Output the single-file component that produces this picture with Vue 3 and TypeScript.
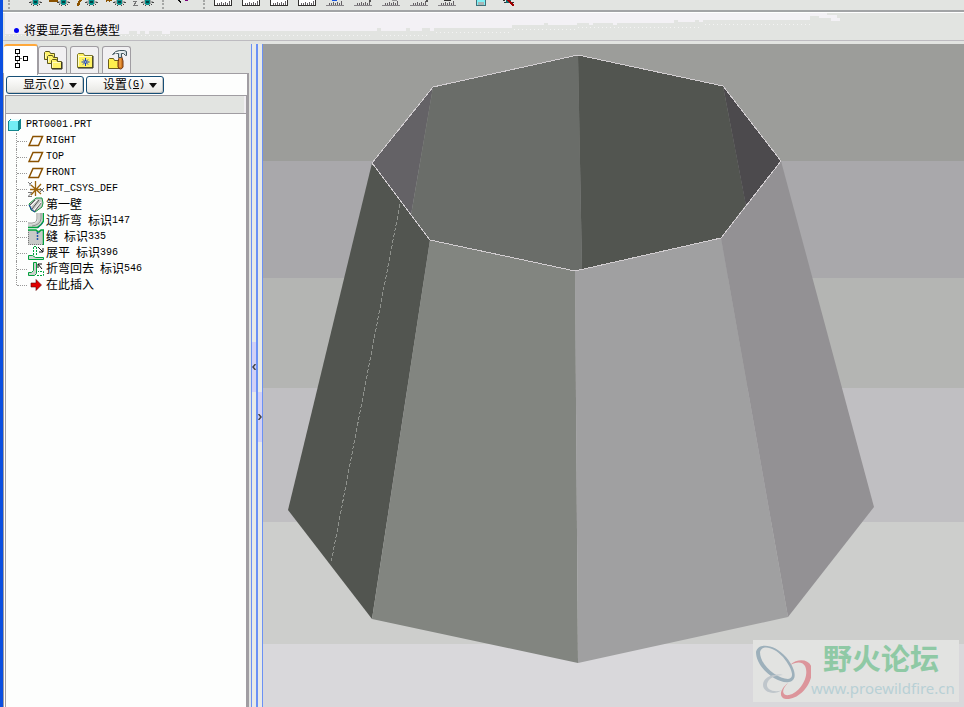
<script setup lang="ts">
import { ref } from 'vue'

interface TreeItem { icon: string; name: string }

const datumTools: string[] = ['plane', 'axis-plane', 'axis', 'point', 'csys']
const axisMarks: Record<string, string> = {
  plane: '',
  'axis-plane': 'M0 0v1h9',
  axis: 'M4 0l-2 2v2h-1v2',
  point: 'M1 1l2-1l2 1M6 0v1',
  csys: 'M0 1h4l-3 4h4',
}
const rulerTools: { label: string; tone: string; extra?: string; mark?: string }[] = [
  { label: '线框', tone: 'solid' },
  { label: '隐藏线', tone: 'solid' },
  { label: '消隐', tone: 'solid' },
  { label: '着色', tone: 'solid' },
  { label: '测量', tone: 'pale', extra: 'M6 0h5v1h-5z', mark: '#1454e0' },
  { label: '区域', tone: 'pale', extra: 'M15 0h2v2h-2z', mark: '#555555' },
  { label: '分析', tone: 'pale', extra: 'M10 0h5v1h-5z', mark: '#999999' },
  { label: '曲线', tone: 'pale', extra: 'M16 0h2v2h-2z', mark: '#555555' },
  { label: '曲面', tone: 'pale', extra: 'M6 0h7v1h-7z', mark: '#333333' },
]
const tabs = ['模型树', '文件夹浏览器', '收藏夹', '连接']
const activeTab = ref(0)
const menus = [
  { text: '显示', key: 'O' },
  { text: '设置', key: 'G' },
]
const items: TreeItem[] = [
  { icon: 'plane', name: 'RIGHT' },
  { icon: 'plane', name: 'TOP' },
  { icon: 'plane', name: 'FRONT' },
  { icon: 'csys', name: 'PRT_CSYS_DEF' },
  { icon: 'wall', name: '第一壁' },
  { icon: 'bend', name: '边折弯 标识147' },
  { icon: 'rip', name: '缝 标识335' },
  { icon: 'unbend', name: '展平 标识396' },
  { icon: 'bendback', name: '折弯回去 标识546' },
  { icon: 'insert', name: '在此插入' },
]
/* Latin and Han runs are set at different sizes so both fall on the half-width grid. */
function runs(name: string): { text: string; latin: boolean }[] {
  const parts = name.match(/[\x00-\x7f]+|[^\x00-\x7f]+/g) ?? []
  return parts.map((text) => ({ text, latin: text.charCodeAt(0) < 128 }))
}
</script>

<template>
  <div class="window">
    <header class="toolbar">
      <span class="grip"></span>
      <button v-for="tool in datumTools" :key="tool" class="tool" type="button" :aria-label="tool">
        <svg width="28" height="8" viewBox="0 0 28 8" shape-rendering="crispEdges">
          <path :d="axisMarks[tool]" fill="none" :stroke="tool === 'csys' ? '#777777' : '#8a5200'" :stroke-width="tool === 'csys' ? 1 : 2" />
          <path d="M9 1h2v-1h7v1h2v1h-1v1h-1v1h-1v1h-5v-1h-2v-1h-1v-1h-1z" fill="#a4a7a4" />
          <path d="M12 0h5v4h-1v1h-3v-1h-1z" fill="#00908c" />
          <path d="M13 1h3v2h-3z" fill="#004242" />
          <path d="M8 2h2v1h-2zM19 2h2v1h-2zM10 4h1v1h-1zM18 4h1v1h-1zM12 5h1v1h-1zM16 5h1v1h-1z" fill="#444" />
        </svg>
      </button>
      <span class="grip inner"></span>
      <button class="tool" type="button" aria-label="选取">
        <svg width="28" height="8" viewBox="0 0 28 8" shape-rendering="crispEdges">
          <path d="M11 0h2v1h1v2h-1v-1h-1v-1h-1z" fill="#111" />
          <path d="M18 0h3v1h-3z" fill="#7b007b" />
        </svg>
      </button>
      <span class="grip wide"></span>
      <button v-for="tool in rulerTools" :key="tool.label" class="tool" :class="tool.tone" type="button" :aria-label="tool.label">
        <svg width="28" height="8" viewBox="0 0 28 8" shape-rendering="crispEdges">
          <path class="face" d="M6 0h16v5h-16z" />
          <path class="line" d="M5 0h1v5h-1zM22 0h1v5h-1z" />
          <path class="line" d="M5 5h18v1h-18z" />
          <path class="tick" d="M8 3v2M10 3v2M12 2v3M14 3v2M16 2v3M18 3v2M20 1v4" transform="translate(.5)" />
          <path v-if="tool.extra" :d="tool.extra" :fill="tool.mark" transform="translate(5)" />
        </svg>
      </button>
      <span class="space"></span>
      <button class="tool" type="button" aria-label="保存">
        <svg width="28" height="8" viewBox="0 0 28 8" shape-rendering="crispEdges">
          <path d="M9 0h10v6h-10z" fill="#3f6f78" />
          <path d="M10 0h8v5h-8z" fill="#7df0f4" />
          <path d="M11 2h6v3h-6z" fill="#a9b4b4" />
        </svg>
      </button>
      <button class="tool" type="button" aria-label="关闭显示">
        <svg width="28" height="8" viewBox="0 0 28 8" shape-rendering="crispEdges">
          <path d="M8 0h2v1h-2zM9 2h3v1h-3zM15 2h4v1h-4z" fill="#333" />
          <path d="M11 0h5v3h-5z" fill="#087070" />
          <path d="M13 0l6 6" stroke="#a00000" stroke-width="2" />
        </svg>
      </button>
    </header>

    <div class="message">
      <svg class="sheen" width="964" height="28" viewBox="0 0 964 28" shape-rendering="crispEdges" aria-hidden="true">
        <path fill="#f3f1f5" d="M5 0H827V2H837V5H840V8H831V5H819V3H810V7H703V9H699V7H695V9H678V7H674V10H617V12H613V10H593V12H589V10H577V12H548V10H544V12H512V15H434V18H430V15H422V18H410V15H406V18H381V15H377V18H170V21H162V18H149V21H145V18H140V21H137V18H129V21H5z" />
        <path fill="none" stroke="#f4f4f4" stroke-dasharray="1 3" d="M5 22.500H370M382 22.500H430M436 19.500H512M514 16.500H575M578 14.500H700M705 11.500H812" />
      </svg>
      <span class="bullet"></span>
      <span class="message-text">将要显示着色模型</span>
    </div>

    <main class="work">
      <aside class="navigator">
        <nav class="tabs">
          <button v-for="(tab, i) in tabs" :key="tab" type="button" class="tab" :class="{ active: activeTab === i }" :aria-label="tab" @click="activeTab = i">
            <svg v-if="i === 0" width="20" height="20" viewBox="0 0 20 20" shape-rendering="crispEdges">
              <path d="M6 5v9M8 9h3" stroke="#777" />
              <g fill="#fff" stroke="#000">
                <path d="M4.500 .5h4v4h-4zM4.500 7.500h4v4h-4zM4.500 14.500h4v4h-4zM12.500 7.500h4v4h-4z" />
              </g>
            </svg>
            <svg v-else-if="i === 1" width="20" height="20" viewBox="0 0 20 20">
              <g fill="#fff36a" stroke="#5c5720">
                <path d="M1.500 9.500v-7l1-1h4l1 2h4v6z" />
                <path d="M4.500 13.500v-7l1-1h4l1 2h4v6z" />
                <path d="M8.500 18.500v-8l1-1h4l1 2h4v7z" />
              </g>
              <path d="M2.500 8V4M5.500 12V8M9.500 17.500v-5h8" stroke="#fffbc0" fill="none" />
              <path d="M9 19h10v-7" stroke="#27261a" fill="none" />
            </svg>
            <svg v-else-if="i === 2" width="20" height="20" viewBox="0 0 20 20">
              <path d="M2.500 17.500v-13l1-1h5l1 2h8v12z" fill="#fff263" stroke="#7b762f" />
              <path d="M3 18h15V6" stroke="#28261a" fill="none" />
              <path d="M3.500 16V5M4 6.500h13" stroke="#fffccb" fill="none" />
              <path d="M10.500 8v8M6.500 12h8M8 9.500l5 5M13 9.500l-5 5" stroke="#123bc4" />
              <path d="M10 11.500h1v1h-1z" fill="#fff" />
            </svg>
            <svg v-else width="20" height="20" viewBox="0 0 20 20">
              <path d="M1.500 18.500v-9l1-1h4l1 2h5v8z" fill="#fff04d" stroke="#6b5d20" />
              <path d="M12.500 6h2l1.500 5v6q-1 2-2.500 2t-2.500-2v-5z" fill="#d27a22" stroke="#6e3310" />
              <path d="M13 8v9" stroke="#ffb35c" />
              <path d="M5.500 4.500q3-4 7-4h5l2 1v4h-1l-2-2h-2v4h-3v-4q-3-1-6 1z" fill="#cfdadd" stroke="#40545c" />
              <path d="M8 3l5-1h4" stroke="#fff" fill="none" />
            </svg>
          </button>
        </nav>
        <section class="panel">
          <div class="menus">
            <button v-for="menu in menus" :key="menu.key" class="menu" type="button">
              <span>{{ menu.text }}</span><span class="latin">(<u>{{ menu.key }}</u>)</span>
              <svg width="8" height="5" viewBox="0 0 8 5" aria-hidden="true"><path d="M0 0h8L4 5z" fill="#101010" /></svg>
            </button>
          </div>
          <div class="column-head"></div>
          <div class="tree">
            <div class="root-row">
              <svg width="14" height="14" viewBox="0 0 14 14" shape-rendering="crispEdges">
                <path d="M0 3l3-2h10v9l-3 3H0z" fill="#12858c" />
                <path d="M1 3l3-2h8l-2 2z" fill="#e8ffff" />
                <path d="M1 3h9v9H1z" fill="#72edf4" />
              </svg>
              <span class="latin">PRT0001.PRT</span>
            </div>
            <ul class="branch">
              <li v-for="item in items" :key="item.name" class="row">
                <span class="twig"></span>
                <svg width="16" height="16" viewBox="0 0 16 16" aria-hidden="true">
                  <path v-if="item.icon === 'plane'" d="M5 3.500h9.500l-4 9h-9.500z" fill="none" stroke="#8a5200" stroke-width="1.500" />
                  <g v-else-if="item.icon === 'csys'" fill="none">
                    <path d="M7.500 0v15M2 8.500h11M3 14l10-11M3 4l10 9" stroke="#9a640c" stroke-width="1.300" />
                    <path d="M0 1l2 2l2-2M2 3v2M0 11.500h4l-4 4h4M12 7l4 4M16 7l-4 4" stroke="#777" />
                  </g>
                  <g v-else-if="item.icon === 'wall'">
                    <path d="M1 7l7-6h6l1 5l-1 4l-7 5l-4-2z" fill="#c9cbc9" stroke="#16933f" />
                    <path d="M2 8l5-5M4 12l7-9M7 14l6-8" stroke="#555" />
                    <path d="M1 8l3 5l3 2" fill="none" stroke="#1737a8" />
                    <path d="M3 9l6-6M6 13l7-8" stroke="#fff" />
                  </g>
                  <g v-else-if="item.icon === 'bend'" fill="none">
                    <path d="M0 11q9 1 10-4V0h5v8q-2 6-9 7H0z" fill="#cfd1cf" />
                    <path d="M0 10q9 1 9-4V0M4 13q8-1 9-7V0" stroke="#8c8f8c" />
                    <path d="M15.500 0v8q-2 4-6 6.500H0" stroke="#00a23c" stroke-width="1.500" />
                    <path d="M10 15l5-5" stroke="#2f55b5" stroke-dasharray="1 1" />
                  </g>
                  <g v-else-if="item.icon === 'rip'">
                    <path d="M0 1h16v15H0z" fill="#c8cac8" />
                    <path d="M.5 1v14.500H15" stroke="#777" stroke-dasharray="1 1" fill="none" />
                    <path d="M0 1h8l2 2h1l2-2h3M15.500 1v15" stroke="#00a23c" stroke-width="1.500" fill="none" />
                    <path d="M9.500 3v8" stroke="#1e55a8" stroke-width="1.500" stroke-dasharray="2 1" />
                  </g>
                  <g v-else-if="item.icon === 'unbend'" fill="none">
                    <path d="M.5 10.500h4l3 2h8v2H.5z" fill="#d3d5d3" stroke="#00a23c" />
                    <path d="M5.500 10V1.500h3V11" stroke="#00a23c" stroke-dasharray="2 1" />
                    <path d="M10 2l5 5M15 3v4h-4" stroke="#111" />
                  </g>
                  <g v-else-if="item.icon === 'bendback'" fill="none">
                    <path d="M.5 11.500h3l2-2v-8h3v11l-2 2h-6z" fill="#cdd0cd" stroke="#00a23c" />
                    <path d="M9 14.500h6.500v-4H10" stroke="#00a23c" stroke-dasharray="2 1" />
                    <path d="M14 8l-4-5M10 7V3h4" stroke="#111" />
                  </g>
                  <path v-else d="M3 6h5V2.500l5.500 5.500l-5.500 5.500V10H3z" fill="#e00000" stroke="#5d0808" stroke-width=".6" />
                </svg>
                <span class="name"><span v-for="(run, i) in runs(item.name)" :key="i" :class="{ latin: run.latin }">{{ run.text }}</span></span>
              </li>
            </ul>
          </div>
        </section>
      </aside>

      <div class="splitter">
        <div class="track"><button class="handle first" type="button" aria-label="折叠"><svg width="4" height="6" viewBox="0 0 4 6"><path d="M3.500 0L1 3l2.500 3" fill="none" stroke="#444" stroke-width="1.500" /></svg></button></div>
        <div class="track"><button class="handle second" type="button" aria-label="展开"><svg width="4" height="6" viewBox="0 0 4 6"><path d="M.5 0L3 3L.5 6" fill="none" stroke="#444" stroke-width="1.500" /></svg></button></div>
      </div>

      <section class="viewport">
        <svg class="model" viewBox="263 44 701 663" preserveAspectRatio="xMidYMin meet" role="img" aria-label="PRT0001">
          <path d="M372 163L433 87L411 215z" fill="#646266" />
          <path d="M433 87L578 55L582 270L575 271L430 240L411 215z" fill="#6a6d69" />
          <path d="M578 55L723 86L746 205L721 238L582 270z" fill="#525550" />
          <path d="M723 86L781 161L746 206z" fill="#4c4a4d" />
          <path d="M372 163L288 510L372 619L430 240z" fill="#525550" />
          <path d="M430 240L372 619L578 663L575 271z" fill="#828580" />
          <path d="M575 271L578 663L788 617L721 238z" fill="#a0a0a1" />
          <path d="M721 238L788 617L874 507L781 161z" fill="#939194" />
          <path d="M400 204L331 563" stroke="#8f928d" stroke-dasharray="4 2" shape-rendering="crispEdges" />
          <path d="M433 87L578 55L723 86L781 161L721 238L575 271L430 240L372 163z" fill="none" stroke="#d2ced1" shape-rendering="crispEdges" />
        </svg>
        <div class="watermark">
          <svg width="56" height="58" viewBox="0 0 56 58" aria-hidden="true">
            <path fill="#9db0bb" fill-rule="evenodd" d="M1 9C3-1 20 1 31 14C42 27 42 38 34 39C22 41 1 25 1 9zM5 9C5 23 23 36 33 36C41 35 36 24 28 14C19 4 7 1 5 9z" />
            <path fill="#bfc6cb" fill-rule="evenodd" d="M28 32C17 30 8 35 8 42C8 49 19 53 27 47C20 50 11 47 12 41C13 35 21 32 28 32z" />
            <path fill="#dc959b" fill-rule="evenodd" d="M35 22C44 14 56 17 57 26C58 41 44 57 31 56C23 55 25 46 33 40C25 48 28 53 34 52C45 50 55 33 50 23C47 18 41 19 35 22z" />
          </svg>
          <div class="brand">
            <strong>野火论坛</strong>
            <span>www.proewildfire.cn</span>
          </div>
        </div>
      </section>
    </main>
  </div>
</template>

<style>
body { margin: 0; background: #e2e4e1; }
</style>

<style scoped>
* { box-sizing: border-box; }
button { padding: 0; border: 0; background: none; font: inherit; color: inherit; }
svg { display: block; flex: none; }
.window {
  display: flex;
  flex-direction: column;
  min-height: 100vh;
  border-left: 3px solid #0b4fe0;
  background: #e2e4e1;
  color: #000;
  font: 12px/16px "Liberation Sans", "Noto Sans CJK SC", sans-serif;
}
.latin { font: 10px/16px "Liberation Mono", monospace; }
.toolbar {
  display: flex;
  align-items: flex-start;
  height: 12px;
  padding-left: 5px;
  border-bottom: 2px solid #a2a4a6;
  overflow: hidden;
}
.tool { flex: none; width: 28px; height: 8px; }
.grip { flex: none; width: 13px; height: 9px; border-left: 2px dotted #a5a7a5; }
.grip.inner { width: 5px; margin-left: 1px; }
.grip.wide { width: 6px; margin-left: 8px; }
.space { width: 6px; }
.solid .face { fill: #fff; }
.pale .face { fill: none; }
.solid .line { fill: #33312f; }
.pale .line { fill: #858286; }
.pale .line:nth-of-type(2) { fill: none; }
.tick { fill: none; stroke: #656065; }
.message {
  position: relative;
  display: flex;
  align-items: center;
  gap: 5px;
  height: 29px;
  padding: 8px 0 0 11px;
  border-top: 1px solid #fff;
  border-bottom: 1px solid #bdbbc0;
}
.sheen { position: absolute; top: 0; left: -3px; }
.bullet { position: relative; width: 5px; height: 5px; border-radius: 50%; background: #0000f5; }
.message-text { position: relative; }
.work { display: flex; flex: 1; padding-top: 3px; }
.navigator { display: flex; flex-direction: column; width: 246px; }
.tabs { display: flex; gap: 3px; height: 29px; padding-left: 1px; }
.tab {
  display: flex;
  align-items: center;
  justify-content: center;
  width: 29px;
  height: 27px;
  margin-top: 2px;
  border: 1px solid #a09da2;
  border-bottom: 0;
  border-radius: 3px 3px 0 0;
  background: #f1f0f2;
}
.tab.active {
  position: relative;
  width: 34px;
  height: 31px;
  margin: 0 -3px 0 0;
  padding-bottom: 3px;
  border-top: 2px solid #ffa83b;
  border-left: 0;
  background: #fff;
}
.panel {
  display: flex;
  flex: 1;
  flex-direction: column;
  padding: 2px 0 0 1px;
  border: 1px solid #a09da2;
  border-width: 1px 2px 0 1px;
  background: #fdfefd;
}
.menus { display: flex; gap: 2px; padding: 0 0 1px 1px; }
.menu {
  display: flex;
  align-items: center;
  width: 78px;
  height: 18px;
  padding-left: 16px;
  border: 1px solid #174f77;
  border-radius: 3px;
  background: linear-gradient(#fff, #e6e6e2);
  box-shadow: inset -1px -1px #c5c5c3;
}
.menu svg { margin-left: 4px; }
.column-head {
  height: 19px;
  border: 1px solid #a09da2;
  background: #e2e4e1;
  box-shadow: inset -2px 0 #f0eef1;
}
.tree { flex: 1; padding-top: 3px; border: solid #a09da2; border-width: 0 1px; }
.root-row { display: flex; align-items: center; gap: 4px; height: 16px; padding-left: 2px; }
.branch { margin: 0; padding: 0 0 0 10px; list-style: none; }
.row { display: flex; align-items: center; height: 16px; }
.twig { position: relative; width: 12px; height: 16px; }
.twig::before { content: ""; position: absolute; top: 0; left: 0; height: 16px; border-left: 1px dotted #999; }
.twig::after { content: ""; position: absolute; top: 8px; left: 1px; width: 10px; border-top: 1px dotted #999; }
.row:last-child .twig::before { height: 8px; }
.name { display: flex; margin-left: 2px; white-space: pre; }
.splitter { display: flex; padding-left: 2px; border-right: 1px solid #6b91f5; }
.track { display: flex; justify-content: center; width: 5px; border-left: 1px solid #6b91f5; background: #e8eae8; }
.track + .track { width: 6px; border-left-width: 2px; }
.handle {
  display: flex;
  align-items: center;
  justify-content: center;
  width: 4px;
  height: 50px;
  background: #d2d1f6;
}
.handle.first { margin-top: 298px; }
.handle.second { margin-top: 348px; }
.viewport {
  position: relative;
  flex: 1;
  min-width: 0;
  background: linear-gradient(
    #9c9d9a 117px, #a9a8ab 117px 234px, #b4b5b3 234px 344px,
    #c0bfc2 344px 478px, #cdcecc 478px 600px, #d9d8db 600px);
}
.model { width: 100%; height: auto; }
.watermark {
  position: absolute;
  right: 5px;
  bottom: 5px;
  display: flex;
  width: 206px;
  height: 62px;
  padding: 3px 0 0 2px;
  background: #e2e3e1;
}
.brand { display: flex; flex-direction: column; }
.brand strong { padding-left: 12px; color: #8fc9a5; font: 700 29px/34px "Liberation Sans", "Noto Sans CJK SC", sans-serif; }
.brand span { color: #b8d0d5; font: 15px/22px "Noto Sans", sans-serif; }
</style>
